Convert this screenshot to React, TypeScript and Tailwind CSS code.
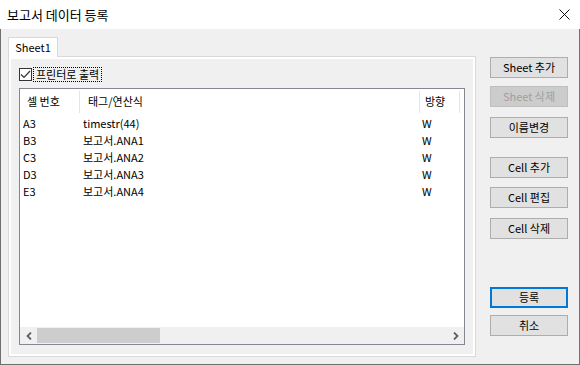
import React from "react";

type Row = { cell: string; tag: string; dir: string };

const rows: Row[] = [
  { cell: "A3", tag: "timestr(44)", dir: "W" },
  { cell: "B3", tag: "보고서.ANA1", dir: "W" },
  { cell: "C3", tag: "보고서.ANA2", dir: "W" },
  { cell: "D3", tag: "보고서.ANA3", dir: "W" },
  { cell: "E3", tag: "보고서.ANA4", dir: "W" },
];

const Button = ({
  label,
  className = "",
  disabled = false,
  primary = false,
}: {
  label: string;
  className?: string;
  disabled?: boolean;
  primary?: boolean;
}) => (
  <button
    className={`h-[21px] w-[78px] flex items-center justify-center text-[11px] ${
      disabled
        ? "bg-[#cccccc] border border-[#bfbfbf] text-[#a0a0a0]"
        : primary
        ? "bg-[#e1e1e1] border-2 border-[#0078d7] text-black"
        : "bg-[#e1e1e1] border border-[#adadad] text-black"
    } ${className}`}
  >
    {label}
  </button>
);

const Chevron = ({ dir }: { dir: "left" | "right" }) => (
  <svg width="6" height="8" viewBox="0 0 6 8">
    <path
      d={dir === "left" ? "M5 0.5 L1.5 4 L5 7.5" : "M1 0.5 L4.5 4 L1 7.5"}
      fill="none"
      stroke="#606060"
      strokeWidth="1.8"
    />
  </svg>
);

const App = () => {
  return (
    <div className="w-[580px] h-[365px] flex flex-col text-black [font-family:'Noto_Sans_CJK_KR','Noto_Sans',sans-serif]">
      {/* title bar */}
      <div className="h-[29px] bg-white flex items-center justify-between pl-[7px] pr-[10px]">
        <span className="text-[13px]">보고서 데이터 등록</span>
        <svg width="11" height="11" viewBox="0 0 11 11">
          <path d="M0.5 0.5 L10.5 10.5 M10.5 0.5 L0.5 10.5" stroke="#111" strokeWidth="1" />
        </svg>
      </div>

      {/* body */}
      <div className="flex-1 flex bg-[#f0f0f0] border-x border-b border-[#707070]">
        <div className="ml-[7px] pt-[8px] flex flex-col">
          <div className="w-[50px] h-[20px] bg-white border border-b-0 border-[#d9d9d9] flex items-center justify-center text-[11px] relative z-10">
            Sheet1
          </div>
          <div className="w-[468px] h-[301px] -mt-px border border-[#d9d9d9] bg-white p-[2px]">
            <div className="h-full bg-[#f0f0f0] pl-[8px] pt-[8px] flex flex-col">
              <div className="flex items-center h-[15px]">
                <div className="w-[13px] h-[13px] border border-[#333] bg-white flex items-center justify-center">
                  <svg width="11" height="11" viewBox="0 0 11 11">
                    <path d="M1 5.5 L4 8.5 L10 2" fill="none" stroke="#333" strokeWidth="1.2" />
                  </svg>
                </div>
                <div className="ml-[1px] h-[15px] px-[2px] border border-dotted border-black flex items-center text-[11px]">
                  프린터로 출력
                </div>
              </div>

              <div className="mt-[6px] w-[446px] h-[257px] border border-[#828790] bg-white flex flex-col">
                <div className="h-[25px] flex items-center text-[11px] shrink-0">
                  <div className="w-[60px] h-[22px] pl-[7px] flex items-center border-r border-[#e5e5e5]">셀 번호</div>
                  <div className="w-[340px] h-[22px] pl-[8px] flex items-center border-r border-[#e5e5e5]">태그/연산식</div>
                  <div className="w-[40px] h-[22px] pl-[5px] flex items-center border-r border-[#e5e5e5]">방향</div>
                </div>
                <div className="flex-1 pt-px text-[11px]">
                  {rows.map((r) => (
                    <div key={r.cell} className="h-[17px] flex items-center">
                      <div className="w-[60px] pl-[3px]">{r.cell}</div>
                      <div className="w-[340px] pl-[3px]">{r.tag}</div>
                      <div className="w-[40px] pl-[2px]">{r.dir}</div>
                    </div>
                  ))}
                </div>
                <div className="h-[17px] bg-[#f0f0f0] flex items-center shrink-0">
                  <div className="w-[17px] h-full flex items-center justify-center">
                    <Chevron dir="left" />
                  </div>
                  <div className="w-[123px] h-[15px] bg-[#cdcdcd]" />
                  <div className="flex-1" />
                  <div className="w-[17px] h-full flex items-center justify-center">
                    <Chevron dir="right" />
                  </div>
                </div>
              </div>
            </div>
          </div>
        </div>

        <div className="ml-[14px] flex flex-col">
          <Button label="Sheet 추가" className="mt-[28px]" />
          <Button label="Sheet 삭제" className="mt-[8px]" disabled />
          <Button label="이름변경" className="mt-[10px]" />
          <Button label="Cell 추가" className="mt-[19px]" />
          <Button label="Cell 편집" className="mt-[9px]" />
          <Button label="Cell 삭제" className="mt-[10px]" />
          <Button label="등록" className="mt-[48px]" primary />
          <Button label="취소" className="mt-[7px]" />
        </div>
      </div>
    </div>
  );
};

export default App;
